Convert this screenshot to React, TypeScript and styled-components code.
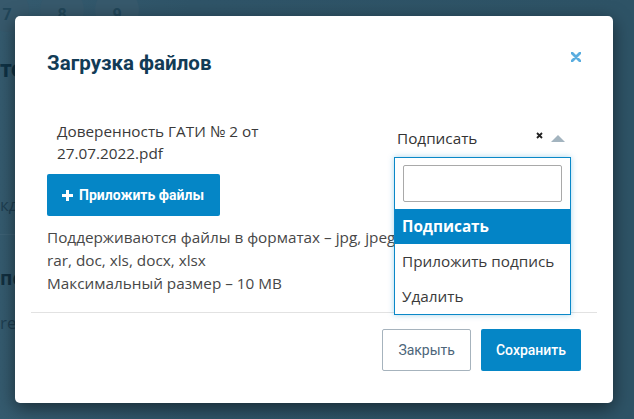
import styled, { createGlobalStyle } from "styled-components";

const GlobalStyle = createGlobalStyle`
  html, body {
    margin: 0;
    padding: 0;
  }
  body {
    font-family: "Open Sans", "Liberation Sans", sans-serif;
    background: #2f5468;
  }
  * { box-sizing: border-box; }
`;

const Screen = styled.div`
  position: relative;
  width: 634px;
  height: 419px;
  overflow: hidden;
  background: linear-gradient(90deg, #355b6f 0%, #2f5468 30%, #2e5366 100%);
`;

// faded page behind the modal
const Behind = styled.div`
  display: flex;
  flex-direction: column;
  color: #16394d;
`;

const Steps = styled.div`
  display: flex;
  gap: 11px;
  margin: -12px 0 0 -15px;
`;

const Step = styled.div`
  width: 44px;
  height: 44px;
  border-radius: 50%;
  background: #37596c;
  display: flex;
  align-items: center;
  justify-content: center;
  padding-top: 8px;
  font-family: Roboto, "Liberation Sans", sans-serif;
  font-weight: 700;
  font-size: 16px;
  color: #214659;
`;

const BehindHeading = styled.div`
  margin-top: 24px;
  font-family: Roboto, "Liberation Sans", sans-serif;
  font-weight: 700;
  font-size: 23px;
  color: #0f3245;
  white-space: nowrap;
`;

const BehindText = styled.div<{ $top: number; $bold?: boolean }>`
  margin-top: ${({ $top }) => $top}px;
  font-size: ${({ $bold }) => ($bold ? "19px" : "17px")};
  font-weight: ${({ $bold }) => ($bold ? 700 : 400)};
  color: ${({ $bold }) => ($bold ? "#112f40" : "#1e3f52")};
  white-space: nowrap;
`;

const BehindLine = styled.div`
  margin-top: 18px;
  height: 1px;
  width: 40px;
  background: #3d6175;
`;

const Modal = styled.div`
  position: absolute;
  left: 15px;
  top: 16px;
  width: 598px;
  background: #ffffff;
  border-radius: 5px;
  box-shadow: 0 5px 18px rgba(0, 0, 0, 0.5);
  padding: 34px 32px 32px;
  display: flex;
  flex-direction: column;
`;

const Header = styled.div`
  display: flex;
  justify-content: space-between;
  align-items: flex-start;
  height: 28px;
`;

const Title = styled.h2`
  margin: 0;
  font-family: Roboto, "Liberation Sans", sans-serif;
  font-weight: 700;
  font-size: 20.5px;
  line-height: 27px;
  color: #123b56;
`;

const CloseButton = styled.button`
  border: 0;
  padding: 0;
  margin-top: 2px;
  background: none;
  width: 10px;
  height: 10px;
  display: flex;
  cursor: pointer;
`;

const FileRow = styled.div`
  display: flex;
  justify-content: space-between;
  align-items: flex-start;
  margin-top: 42px;
  padding: 0 10px;
`;

const FileName = styled.div`
  width: 240px;
  font-size: 15.3px;
  line-height: 22px;
  color: #3a3a3a;
`;

const SelectWrap = styled.div`
  position: relative;
  width: 177px;
  margin-top: 6px;
`;

const SelectControl = styled.div`
  display: flex;
  align-items: center;
  height: 31px;
  padding: 0 6px 8px 3px;
  font-size: 15.3px;
  line-height: 22px;
  color: #333;
`;

const SelectValue = styled.span`
  flex: 1;
`;

const ClearIcon = styled.span`
  display: flex;
  margin-right: 8px;
  margin-top: -4px;
`;

const Arrow = styled.span`
  width: 0;
  height: 0;
  border-left: 7px solid transparent;
  border-right: 7px solid transparent;
  border-bottom: 7px solid #a3b4bf;
  margin-top: 2px;
`;

const Dropdown = styled.div`
  position: absolute;
  top: 100%;
  left: 0;
  right: 0;
  background: #fff;
  border: 1px solid #0a88c8;
  box-shadow: 0 0 6px rgba(10, 136, 200, 0.35);
  z-index: 2;
`;

const SearchBox = styled.div`
  padding: 7px 8px 7px;
`;

const SearchInput = styled.input`
  display: block;
  width: 100%;
  height: 37px;
  border: 1px solid #a9a9a9;
  border-radius: 2px;
  outline: none;
`;

const Option = styled.div<{ $active?: boolean }>`
  height: 35px;
  line-height: 35px;
  padding-left: 7px;
  font-size: 15.3px;
  font-weight: ${({ $active }) => ($active ? 700 : 400)};
  color: ${({ $active }) => ($active ? "#ffffff" : "#3a3a3a")};
  background: ${({ $active }) => ($active ? "#0384c6" : "transparent")};
`;

const AttachButton = styled.button`
  align-self: flex-start;
  margin-top: 10px;
  height: 42px;
  padding: 0 16px 0 15px;
  display: flex;
  align-items: center;
  gap: 6px;
  border: 0;
  border-radius: 2px;
  background: #0586c6;
  color: #fff;
  font-family: Roboto, "Liberation Sans", sans-serif;
  font-weight: 700;
  font-size: 14px;
  cursor: pointer;
`;

const Hint = styled.div`
  margin-top: 10px;
  font-size: 15.3px;
  line-height: 23px;
  color: #474747;
`;

const Divider = styled.hr`
  margin: 17px -16px 0;
  border: 0;
  height: 1px;
  background: #e2e2e2;
`;

const Footer = styled.div`
  display: flex;
  justify-content: flex-end;
  gap: 10px;
  margin-top: 16px;
`;

const FooterButton = styled.button<{ variant?: "primary" | "ghost" }>`
  height: 42px;
  padding: 0 15px;
  border-radius: 2px;
  font-family: Roboto, "Liberation Sans", sans-serif;
  font-size: 14px;
  cursor: pointer;
  font-weight: ${({ variant }) => (variant === "ghost" ? 400 : 500)};
  border: ${({ variant }) => (variant === "ghost" ? "1px solid #a6b3bd" : "0")};
  background: ${({ variant }) => (variant === "ghost" ? "#ffffff" : "#0586c6")};
  color: ${({ variant }) => (variant === "ghost" ? "#4d667a" : "#ffffff")};
`;

export default function App() {
  return (
    <Screen>
      <GlobalStyle />
      <Behind>
        <Steps>
          <Step>7</Step>
          <Step>8</Step>
          <Step>9</Step>
        </Steps>
        <BehindHeading>тест</BehindHeading>
        <BehindText $top={110}>кд</BehindText>
        <BehindLine />
        <BehindText $top={30} $bold>пс</BehindText>
        <BehindText $top={20}>re</BehindText>
      </Behind>

      <Modal>
        <Header>
          <Title>Загрузка файлов</Title>
          <CloseButton aria-label="Закрыть">
            <svg width="10" height="10" viewBox="0 0 10 10">
              <path d="M1 1 L9 9 M9 1 L1 9" stroke="#5aaddf" strokeWidth="2.8" strokeLinecap="round" />
            </svg>
          </CloseButton>
        </Header>

        <FileRow>
          <FileName>Доверенность ГАТИ № 2 от 27.07.2022.pdf</FileName>
          <SelectWrap>
            <SelectControl>
              <SelectValue>Подписать</SelectValue>
              <ClearIcon>
                <svg width="7" height="7" viewBox="0 0 7 7">
                  <path d="M1 1 L6 6 M6 1 L1 6" stroke="#222" strokeWidth="1.8" />
                </svg>
              </ClearIcon>
              <Arrow />
            </SelectControl>
            <Dropdown>
              <SearchBox>
                <SearchInput />
              </SearchBox>
              <Option $active>Подписать</Option>
              <Option>Приложить подпись</Option>
              <Option>Удалить</Option>
            </Dropdown>
          </SelectWrap>
        </FileRow>

        <AttachButton>
          <svg width="11" height="11" viewBox="0 0 11 11">
            <path d="M5.5 0 V11 M0 5.5 H11" stroke="#fff" strokeWidth="3" />
          </svg>
          Приложить файлы
        </AttachButton>

        <Hint>
          Поддерживаются файлы в форматах – jpg, jpeg, png, pdf, zip,
          <br />
          rar, doc, xls, docx, xlsx
          <br />
          Максимальный размер – 10 MB
        </Hint>

        <Divider />

        <Footer>
          <FooterButton variant="ghost">Закрыть</FooterButton>
          <FooterButton>Сохранить</FooterButton>
        </Footer>
      </Modal>
    </Screen>
  );
}
